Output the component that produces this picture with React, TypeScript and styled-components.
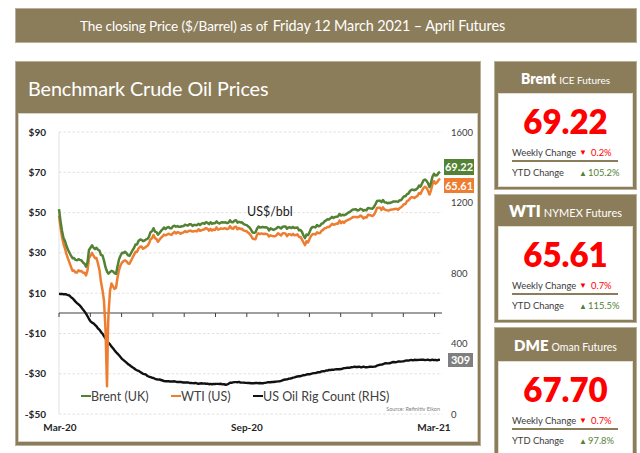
import styled, { createGlobalStyle } from "styled-components";

const KHAKI = "#8c7d5a";
const GREEN = "#548235";
const ORANGE = "#ed7d31";

const GlobalStyle = createGlobalStyle`
  html, body {
    margin: 0;
    padding: 0;
    background: #ffffff;
    font-family: Lato, "Open Sans", "Liberation Sans", sans-serif;
  }
`;

const Page = styled.div`
  width: 640px;
  height: 453px;
  box-sizing: border-box;
  padding: 8px 3px 0 15px;
  overflow: hidden;
`;

const Banner = styled.div`
  height: 35px;
  background: ${KHAKI};
  border: 1px solid #b9b09a;
  box-sizing: border-box;
  display: flex;
  align-items: center;
  padding-left: 64px;
  color: #ffffff;
  white-space: nowrap;
`;

const BannerLead = styled.span`
  font-size: 13.6px;
  letter-spacing: -0.15px;
  margin-right: 5px;
`;

const BannerDate = styled.span`
  font-size: 14.4px;
  letter-spacing: -0.1px;
`;

const MainRow = styled.div`
  display: flex;
  gap: 13px;
  margin-top: 18px;
  align-items: flex-start;
`;

const ChartPanel = styled.div`
  width: 466px;
  height: 385px;
  box-sizing: border-box;
  background: ${KHAKI};
  border: 1px solid #b9b09a;
  padding: 0 2px 3px 2px;
  display: flex;
  flex-direction: column;
`;

const ChartTitle = styled.div`
  height: 53px;
  display: flex;
  align-items: center;
  padding-left: 10px;
  color: #ffffff;
  font-size: 19.8px;
  letter-spacing: -0.1px;
`;

const PlotBox = styled.div`
  flex: 1;
  background: #ffffff;
  border: 1px solid #d6d1c4;
`;

const CardColumn = styled.div`
  display: flex;
  flex-direction: column;
  gap: 4px;
  width: 143px;
`;

const Card = styled.div`
  background: ${KHAKI};
  border: 1px solid #b9b09a;
  box-sizing: border-box;
  padding: 0 3px 2px 3px;
`;

const CardHead = styled.div<{ $h: number }>`
  height: ${(p) => p.$h}px;
  line-height: ${(p) => p.$h}px;
  text-align: center;
  color: #ffffff;
  white-space: nowrap;
`;

const HeadName = styled.span<{ $size: number }>`
  font-weight: 800;
  font-size: ${(p) => p.$size}px;
  margin-right: 3px;
`;

const HeadSub = styled.span<{ $size: number }>`
  font-size: ${(p) => p.$size}px;
`;

const CardBody = styled.div`
  background: #ffffff;
  border: 1px solid #e2ddd0;
  padding: 5px 0 5px;
`;

const Price = styled.div`
  text-align: center;
  color: #ff0000;
  font-weight: 800;
  font-size: 33px;
  line-height: 44px;
  margin-bottom: 1px;
`;

const ChangeRow = styled.div<{ $line?: boolean }>`
  display: grid;
  grid-template-columns: 67px 9px 1fr;
  align-items: center;
  margin: 0 14px 0 13px;
  height: ${(p) => (p.$line ? 16 : 17)}px;
  padding-top: ${(p) => (p.$line ? 0 : 2)}px;
  border-bottom: ${(p) => (p.$line ? `2px solid ${KHAKI}` : "none")};
  font-size: 9.4px;
  color: #3b3b3b;
  white-space: nowrap;
`;

const Arrow = styled.span<{ $up?: boolean }>`
  color: ${(p) => (p.$up ? GREEN : "#ff0000")};
  font-size: 8px;
`;

const ChangeValue = styled.span<{ $up?: boolean }>`
  color: ${(p) => (p.$up ? GREEN : "#ff0000")};
  padding-left: ${(p) => (p.$up ? 0 : 3)}px;
`;

// ---- chart data (page pixel coordinates) ----

type Pt = [number, number];

const brentKeys: Pt[] = [
  [59, 211], [61, 225], [63, 238], [66, 245], [70, 255], [73, 260], [77, 261], [80, 260],
  [84, 265], [87, 267], [89, 250], [91, 247], [95, 249], [98, 250], [101, 255], [103, 258],
  [106, 270], [108, 275], [110, 272], [113, 273], [116, 274], [118, 265], [120, 258],
  [122, 253], [126, 254], [130, 256], [134, 249], [138, 243], [141, 240], [143, 242],
  [146, 241], [150, 235], [153, 230], [156, 232], [158, 236], [160, 233], [163, 230],
  [167, 229], [172, 228], [182, 227], [190, 226], [200, 225], [210, 224], [225, 223],
  [235, 222], [242, 223], [247, 227], [252, 232], [255, 235], [258, 229], [262, 228],
  [268, 230], [273, 231], [278, 229], [283, 228], [290, 229], [297, 229], [302, 233],
  [305, 238], [308, 235], [312, 229], [317, 227], [322, 225], [330, 219], [335, 218],
  [340, 216], [345, 215], [350, 212], [355, 210], [362, 211], [368, 210], [373, 211],
  [375, 206], [377, 202], [383, 202], [387, 203], [392, 203], [400, 202], [403, 199],
  [407, 195], [412, 191], [417, 189], [420, 187], [423, 183], [425, 180], [428, 185],
  [430, 190], [432, 180], [433, 175], [436, 177], [438, 176], [440, 173],
];

const wtiOffset: Pt[] = [
  [59, 7], [63, 6], [70, 10], [73, 13], [80, 11], [87, 8], [92, 8], [97, 10], [100, 22],
  [103, 37], [105, 45], [106, 80], [107, 115], [108, 55], [109, 25], [111, 12], [113, 15],
  [115, 16], [117, 12], [120, 10], [125, 8], [140, 7], [200, 6], [300, 7], [440, 7.5],
];

const rigKeys: Pt[] = [
  [59, 295], [66, 295], [70, 297], [75, 302], [80, 307], [85, 313], [90, 322], [94, 325],
  [97, 328], [102, 334], [108, 343], [115, 352], [122, 360], [128, 365], [135, 370],
  [142, 374], [148, 377], [156, 380], [165, 382], [180, 383], [192, 384], [210, 385],
  [222, 385], [226, 386], [230, 384], [236, 383], [250, 384], [262, 384], [280, 382],
  [300, 377], [320, 373], [330, 371], [340, 370], [353, 368], [365, 368], [373, 368],
  [383, 365], [395, 363], [413, 361], [428, 361], [440, 361],
];

const interp = (keys: Pt[], x: number) => {
  for (let i = 1; i < keys.length; i++) {
    if (x <= keys[i][0]) {
      const [x0, y0] = keys[i - 1];
      const [x1, y1] = keys[i];
      return y0 + ((y1 - y0) * (x - x0)) / (x1 - x0 || 1);
    }
  }
  return keys[keys.length - 1][1];
};

const noise = (i: number, seed: number) => {
  const v = Math.sin(i * 12.9898 + seed * 78.233) * 43758.5453;
  return (v - Math.floor(v)) * 2 - 1;
};

const xs: number[] = [];
for (let x = 59; x <= 440; x += 1.5) xs.push(Math.round(x * 10) / 10);
[106, 107, 108].forEach((x) => xs.push(x));
xs.sort((a, b) => a - b);

const toPath = (pts: Pt[]) =>
  pts.map(([x, y], i) => `${i ? "L" : "M"}${x.toFixed(1)} ${y.toFixed(1)}`).join(" ");

const brentPts: Pt[] = xs.map((x, i) => [x, interp(brentKeys, x) + noise(i, 1) * 1.3]);
const wtiPts: Pt[] = xs.map((x, i) => [
  x,
  brentPts[i][1] + interp(wtiOffset, x) + noise(i, 2) * 0.6,
]);
const rigPts: Pt[] = xs.map((x, i) => [x, interp(rigKeys, x) + noise(i, 3) * 0.3]);

const leftTicks = ["$90", "$70", "$50", "$30", "$10", "-$10", "-$30", "-$50"];
const rightTicks = ["1600", "1200", "800", "400", "0"];

const PriceChart = () => (
  <svg width="459" height="327" viewBox="19 115 459 327" style={{ display: "block" }}>
    {leftTicks.map((t, i) => {
      const y = 133 + i * 40.3;
      return (
        <g key={t}>
          <line x1={59} x2={442} y1={y} y2={y} stroke="#d9d9d9" strokeWidth={0.8} strokeDasharray="2.5 2" />
          <text x={46} y={y + 3.5} textAnchor="end" fontSize="10" fontWeight="700" fill="#262626">
            {t}
          </text>
        </g>
      );
    })}
    {rightTicks.map((t, i) => (
      <text key={t} x={451} y={133 + i * 70.5 + 3.5} fontSize="9.5" fill="#404040">
        {t}
      </text>
    ))}
    <line x1={59} x2={59} y1={133} y2={415} stroke="#d9d9d9" strokeWidth={0.8} />
    <line x1={59} x2={442} y1={314} y2={314} stroke="#404040" strokeWidth={1.1} />
    {Array.from({ length: 13 }, (_, k) => (
      <line key={k} x1={59 + k * 31.3} x2={59 + k * 31.3} y1={314} y2={318} stroke="#404040" strokeWidth={1} />
    ))}
    <text x={60} y={432} textAnchor="middle" fontSize="10" fontWeight="700" fill="#262626">Mar-20</text>
    <text x={247} y={432} textAnchor="middle" fontSize="10" fontWeight="700" fill="#262626">Sep-20</text>
    <text x={434} y={432} textAnchor="middle" fontSize="10" fontWeight="700" fill="#262626">Mar-21</text>

    <path d={toPath(rigPts)} fill="none" stroke="#111111" strokeWidth={2.4} strokeLinejoin="round" />
    <path d={toPath(wtiPts)} fill="none" stroke={ORANGE} strokeWidth={2.5} strokeLinejoin="round" />
    <path d={toPath(brentPts)} fill="none" stroke={GREEN} strokeWidth={2.5} strokeLinejoin="round" />

    <text x={247} y={217} fontSize="12.5" fill="#1a1a1a">US$/bbl</text>

    <rect x={444} y={160} width={30} height={16} fill={GREEN} />
    <text x={459} y={172} textAnchor="middle" fontSize="11" fontWeight="700" fill="#ffffff">69.22</text>
    <rect x={444} y={179} width={30} height={15} fill={ORANGE} />
    <text x={459} y={190.5} textAnchor="middle" fontSize="11" fontWeight="700" fill="#ffffff">65.61</text>
    <rect x={448} y={354} width={25} height={14} fill="#7f7f7f" />
    <text x={460.5} y={365} textAnchor="middle" fontSize="11" fontWeight="700" fill="#ffffff">309</text>

    <line x1={81} x2={91} y1={397} y2={397} stroke={GREEN} strokeWidth={2} />
    <text x={91} y={401.5} fontSize="12.5" fill="#404040">Brent (UK)</text>
    <line x1={171} x2={181} y1={397} y2={397} stroke={ORANGE} strokeWidth={2} />
    <text x={181} y={401.5} fontSize="12.5" fill="#404040">WTI (US)</text>
    <line x1={253} x2={263} y1={397} y2={397} stroke="#111111" strokeWidth={2} />
    <text x={263} y={401.5} fontSize="12.5" fill="#404040">US Oil Rig Count (RHS)</text>

    <text x={440} y={412} textAnchor="end" fontSize="5.5" fill="#7f7f7f">Source: Refinitiv Eikon</text>
  </svg>
);

interface Benchmark {
  name: string;
  nameSize: number;
  sub: string;
  subSize: number;
  head: number;
  price: string;
  weekly: string;
  ytd: string;
}

const benchmarks: Benchmark[] = [
  { name: "Brent", nameSize: 14, sub: "ICE Futures", subSize: 10, head: 31, price: "69.22", weekly: "0.2%", ytd: "105.2%" },
  { name: "WTI", nameSize: 16, sub: "NYMEX Futures", subSize: 11, head: 31, price: "65.61", weekly: "0.7%", ytd: "115.5%" },
  { name: "DME", nameSize: 15, sub: "Oman Futures", subSize: 10.5, head: 33, price: "67.70", weekly: "0.7%", ytd: "97.8%" },
];

const PriceCard = ({ b }: { b: Benchmark }) => (
  <Card>
    <CardHead $h={b.head}>
      <HeadName $size={b.nameSize}>{b.name}</HeadName>
      <HeadSub $size={b.subSize}>{b.sub}</HeadSub>
    </CardHead>
    <CardBody>
      <Price>{b.price}</Price>
      <ChangeRow $line>
        <span>Weekly Change</span>
        <Arrow>▼</Arrow>
        <ChangeValue>{b.weekly}</ChangeValue>
      </ChangeRow>
      <ChangeRow>
        <span>YTD Change</span>
        <Arrow $up>▲</Arrow>
        <ChangeValue $up>{b.ytd}</ChangeValue>
      </ChangeRow>
    </CardBody>
  </Card>
);

const App = () => (
  <>
    <GlobalStyle />
    <Page>
      <Banner>
        <BannerLead>The closing Price ($/Barrel) as of</BannerLead>
        <BannerDate>Friday 12 March 2021 – April Futures</BannerDate>
      </Banner>
      <MainRow>
        <ChartPanel>
          <ChartTitle>Benchmark Crude Oil Prices</ChartTitle>
          <PlotBox>
            <PriceChart />
          </PlotBox>
        </ChartPanel>
        <CardColumn>
          {benchmarks.map((b) => (
            <PriceCard key={b.name} b={b} />
          ))}
        </CardColumn>
      </MainRow>
    </Page>
  </>
);

export default App;
